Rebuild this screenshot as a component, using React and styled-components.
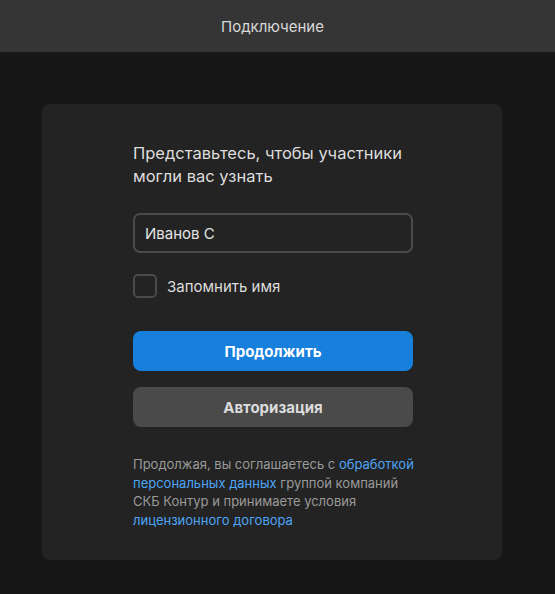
import React, {useState} from 'react'
import styled, {createGlobalStyle} from 'styled-components'

const GlobalStyle = createGlobalStyle`
  body {
    margin: 0;
    background: #171717;
    font-family: Inter, 'Noto Sans', sans-serif;
    color: #dddddd;
  }
`

const Page = styled.div`
  min-height: 594px;
  background: #171717;
`

const Header = styled.header`
  height: 52px;
  background: #353535;
  display: flex;
  align-items: center;
  justify-content: center;
  padding-right: 10px;
  font-size: 15px;
  color: #d8d8d8;
`

const Main = styled.main`
  padding: 52px 53px 0 42px;
`

const Card = styled.section`
  width: 460px;
  height: 456px;
  box-sizing: border-box;
  background: #232323;
  border-radius: 8px;
  padding: 38px 0 0 91px;
`

const Column = styled.div`
  width: 280px;
  display: flex;
  flex-direction: column;
`

const Title = styled.h1`
  margin: 0;
  font-size: 16.5px;
  font-weight: 400;
  line-height: 23px;
  color: #dddddd;
`

const Input = styled.input`
  margin-top: 25px;
  height: 40px;
  box-sizing: border-box;
  border: 2px solid #4a4a4a;
  border-radius: 7px;
  background: transparent;
  padding: 0 10px;
  font: inherit;
  font-size: 15px;
  color: #e4e4e4;
  outline: none;
`

const CheckRow = styled.label`
  margin-top: 21px;
  display: flex;
  align-items: center;
  gap: 10px;
  font-size: 15px;
  color: #dddddd;
  cursor: pointer;
`

const Box = styled.span`
  width: 24px;
  height: 24px;
  box-sizing: border-box;
  border: 2px solid #4a4a4a;
  border-radius: 5px;
  background: ${p => (p.$on ? '#1a80dc' : 'transparent')};
`

const Button = styled.button`
  margin-top: ${p => p.$gap}px;
  height: 40px;
  border: none;
  border-radius: 8px;
  background: ${p => (p.$primary ? '#1780dc' : '#4a4a4a')};
  color: ${p => (p.$primary ? '#ffffff' : '#dcdcdc')};
  font: inherit;
  font-size: 15px;
  font-weight: 700;
  cursor: pointer;
`

const Note = styled.p`
  margin: 28px 0 0;
  font-size: 13px;
  line-height: 18.7px;
  color: #9a9a9a;
  white-space: nowrap;
`

const Link = styled.a`
  color: #4ea5f5;
  text-decoration: none;
`

const App = () => {
  const [name, setName] = useState('Иванов С')
  const [remember, setRemember] = useState(false)

  return (
    <Page>
      <GlobalStyle/>
      <Header>Подключение</Header>
      <Main>
        <Card>
          <Column>
            <Title>Представьтесь, чтобы участники<br/>могли вас узнать</Title>
            <Input value={name} onChange={e => setName(e.target.value)}/>
            <CheckRow onClick={() => setRemember(!remember)}>
              <Box $on={remember}/>
              Запомнить имя
            </CheckRow>
            <Button $primary $gap={33}>Продолжить</Button>
            <Button $gap={16}>Авторизация</Button>
            <Note>
              Продолжая, вы соглашаетесь с <Link href='#'>обработкой</Link><br/>
              <Link href='#'>персональных данных</Link> группой компаний<br/>
              СКБ Контур и принимаете условия<br/>
              <Link href='#'>лицензионного договора</Link>
            </Note>
          </Column>
        </Card>
      </Main>
    </Page>
  )
}

export default App
